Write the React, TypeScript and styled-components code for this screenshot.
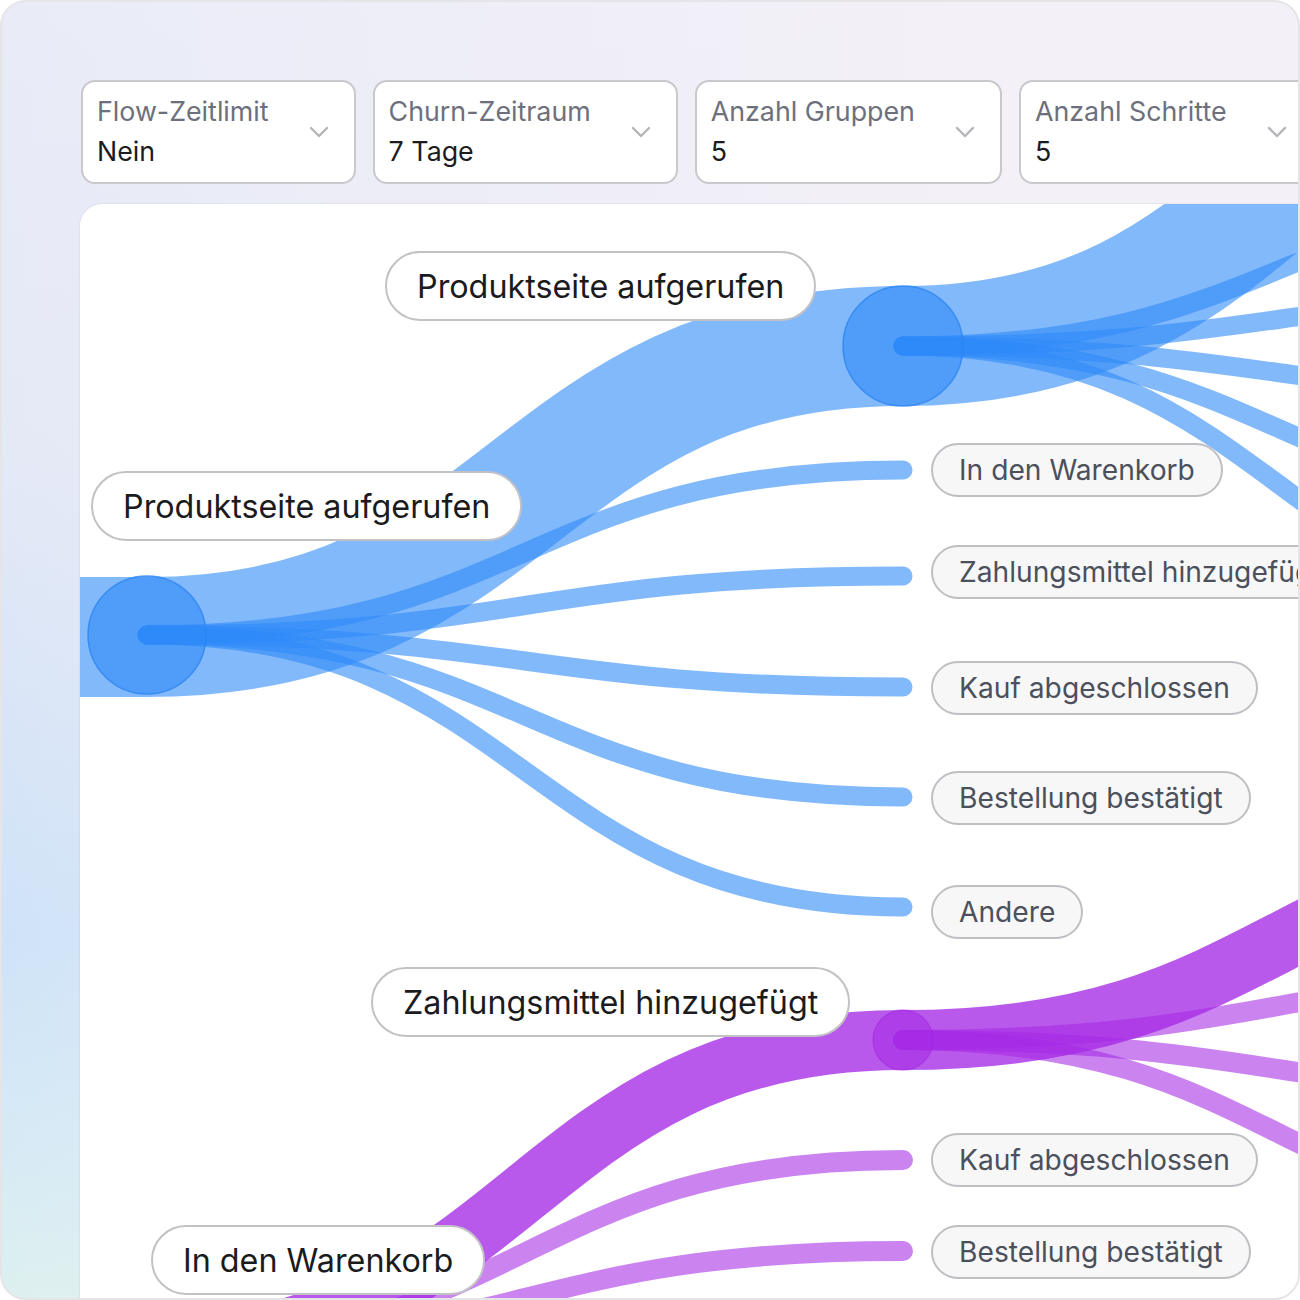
import React from "react";
import styled, { createGlobalStyle } from "styled-components";

const Global = createGlobalStyle`
  html, body { margin: 0; padding: 0; background: #ffffff; }
  body { font-family: Inter, "Noto Sans", "Liberation Sans", sans-serif; }
  * { box-sizing: border-box; }
`;

const Frame = styled.div`
  width: 1300px;
  height: 1300px;
  border: 2px solid #e5e5e8;
  border-radius: 26px;
  overflow: hidden;
  padding: 78px 0 0 78px;
  display: flex;
  flex-direction: column;
  background:
    linear-gradient(90deg, rgba(244, 240, 247, 0) 0%, rgba(244, 240, 247, 0.35) 25%, rgba(244, 240, 247, 1) 80%),
    linear-gradient(180deg, #e9ecf7 0%, #e4e9f6 35%, #d9e5f7 55%, #cfe3f8 72%, #d6eaf5 88%, #ddf0ef 100%);
`;

const Toolbar = styled.div`
  display: flex;
  gap: 17px;
  padding-left: 1px;
  height: 104px;
  flex: none;
`;

const Dropdown = styled.div`
  flex: none;
  height: 104px;
  display: flex;
  align-items: center;
  gap: 40px;
  padding: 0 25px 0 14px;
  background: #ffffff;
  border: 2px solid #c9c9cd;
  border-radius: 14px;
`;

const Fields = styled.div`
  display: flex;
  flex-direction: column;
  margin-top: -2px;
`;

const FieldLabel = styled.span`
  font-size: 26.8px;
  line-height: 40px;
  color: #6d707c;
  white-space: nowrap;
`;

const FieldValue = styled.span`
  font-size: 26.8px;
  line-height: 40px;
  color: #1c1c1e;
  white-space: nowrap;
`;

const Panel = styled.div`
  margin-top: 20px;
  flex: 1;
  position: relative;
  overflow: hidden;
  background: #ffffff;
  border-radius: 22px 0 0 0;
  box-shadow: 0 0 0 1px rgba(30, 40, 80, 0.05);
`;

const Chart = styled.svg`
  display: block;
  position: absolute;
  left: 0;
  top: 0;
`;

const StepLabel = styled.div<{ $x: number; $y: number }>`
  position: absolute;
  left: ${(p) => p.$x - 80}px;
  top: ${(p) => p.$y - 204}px;
  height: 70px;
  padding: 0 30px;
  display: flex;
  align-items: center;
  background: #ffffff;
  border: 2px solid #c2c2c6;
  border-radius: 35px;
  font-size: 32.3px;
  color: #1b1b1d;
  white-space: nowrap;
`;

const TargetLabel = styled.div<{ $x: number; $y: number }>`
  position: absolute;
  left: ${(p) => p.$x - 80}px;
  top: ${(p) => p.$y - 204}px;
  height: 54px;
  padding: 0 26px;
  display: flex;
  align-items: center;
  background: #f7f7f8;
  border: 2px solid #bfbfc3;
  border-radius: 27px;
  font-size: 28.2px;
  color: #4b505b;
  white-space: nowrap;
`;

const Chevron = () => (
  <svg width="20" height="12" viewBox="0 0 20 12" fill="none">
    <polyline points="2,2 10,10 18,2" stroke="#b4b4b9" strokeWidth="2.4" strokeLinecap="round" strokeLinejoin="round" />
  </svg>
);

const filters = [
  { label: "Flow-Zeitlimit", value: "Nein" },
  { label: "Churn-Zeitraum", value: "7 Tage" },
  { label: "Anzahl Gruppen", value: "5" },
  { label: "Anzahl Schritte", value: "5" },
];

const BLUE = "#2e8bf9";
const PURPLE = "#a52ae6";

const sig = (x0: number, y0: number, x1: number, y1: number) => {
  const m = (x0 + x1) / 2;
  return `M${x0},${y0} C${m},${y0} ${m},${y1} ${x1},${y1}`;
};

const blueTargets = [470, 576, 687, 797, 907];
const blueNext = [192, 292, 400, 513, 626];
const purpleNext = [971, 1099, 1229];

const FlowChart = () => (
  <Chart width={1220} height={1096} viewBox="80 204 1220 1096">
    <path
      d={`M-700,637 L147,637 C525,637 525,346 903,346 C1281,346 1281,30 1659,30`}
      fill="none"
      stroke={BLUE}
      strokeOpacity={0.6}
      strokeWidth={120}
    />
    {blueTargets.map((y) => (
      <path
        key={"b" + y}
        d={sig(147, 635, 903, y)}
        fill="none"
        stroke={BLUE}
        strokeOpacity={0.6}
        strokeWidth={19}
        strokeLinecap="round"
      />
    ))}
    {blueNext.map((y) => (
      <path
        key={"n" + y}
        d={sig(903, 346, 1659, y)}
        fill="none"
        stroke={BLUE}
        strokeOpacity={0.6}
        strokeWidth={19}
        strokeLinecap="round"
      />
    ))}
    <circle cx={147} cy={635} r={59} fill={BLUE} fillOpacity={0.6} stroke="#2a84f2" strokeOpacity={0.8} strokeWidth={1.5} />
    <circle cx={903} cy={346} r={60} fill={BLUE} fillOpacity={0.6} stroke="#2a84f2" strokeOpacity={0.8} strokeWidth={1.5} />

    <path
      d={`M147,1345 C525,1345 525,1040 903,1040 C1281,1040 1281,844 1659,844`}
      fill="none"
      stroke={PURPLE}
      strokeOpacity={0.78}
      strokeWidth={60}
    />
    {[1160, 1251].map((y) => (
      <path
        key={"p" + y}
        d={sig(147, 1345, 903, y)}
        fill="none"
        stroke={PURPLE}
        strokeOpacity={0.58}
        strokeWidth={20}
        strokeLinecap="round"
      />
    ))}
    {purpleNext.map((y) => (
      <path
        key={"q" + y}
        d={sig(903, 1040, 1659, y)}
        fill="none"
        stroke={PURPLE}
        strokeOpacity={0.58}
        strokeWidth={20}
        strokeLinecap="round"
      />
    ))}
    <circle cx={903} cy={1040} r={30} fill={PURPLE} fillOpacity={0.55} stroke="#a226e0" strokeOpacity={0.5} strokeWidth={1.5} />
  </Chart>
);

export default function App() {
  return (
    <>
      <Global />
      <Frame>
        <Toolbar>
          {filters.map((f) => (
            <Dropdown key={f.label}>
              <Fields>
                <FieldLabel>{f.label}</FieldLabel>
                <FieldValue>{f.value}</FieldValue>
              </Fields>
              <Chevron />
            </Dropdown>
          ))}
        </Toolbar>
        <Panel>
          <FlowChart />
          <StepLabel $x={385} $y={251}>Produktseite aufgerufen</StepLabel>
          <StepLabel $x={91} $y={471}>Produktseite aufgerufen</StepLabel>
          <StepLabel $x={371} $y={967}>Zahlungsmittel hinzugefügt</StepLabel>
          <StepLabel $x={151} $y={1225}>In den Warenkorb</StepLabel>

          <TargetLabel $x={931} $y={443}>In den Warenkorb</TargetLabel>
          <TargetLabel $x={931} $y={545}>Zahlungsmittel hinzugefügt</TargetLabel>
          <TargetLabel $x={931} $y={661}>Kauf abgeschlossen</TargetLabel>
          <TargetLabel $x={931} $y={771}>Bestellung bestätigt</TargetLabel>
          <TargetLabel $x={931} $y={885}>Andere</TargetLabel>
          <TargetLabel $x={931} $y={1133}>Kauf abgeschlossen</TargetLabel>
          <TargetLabel $x={931} $y={1225}>Bestellung bestätigt</TargetLabel>
        </Panel>
      </Frame>
    </>
  );
}
